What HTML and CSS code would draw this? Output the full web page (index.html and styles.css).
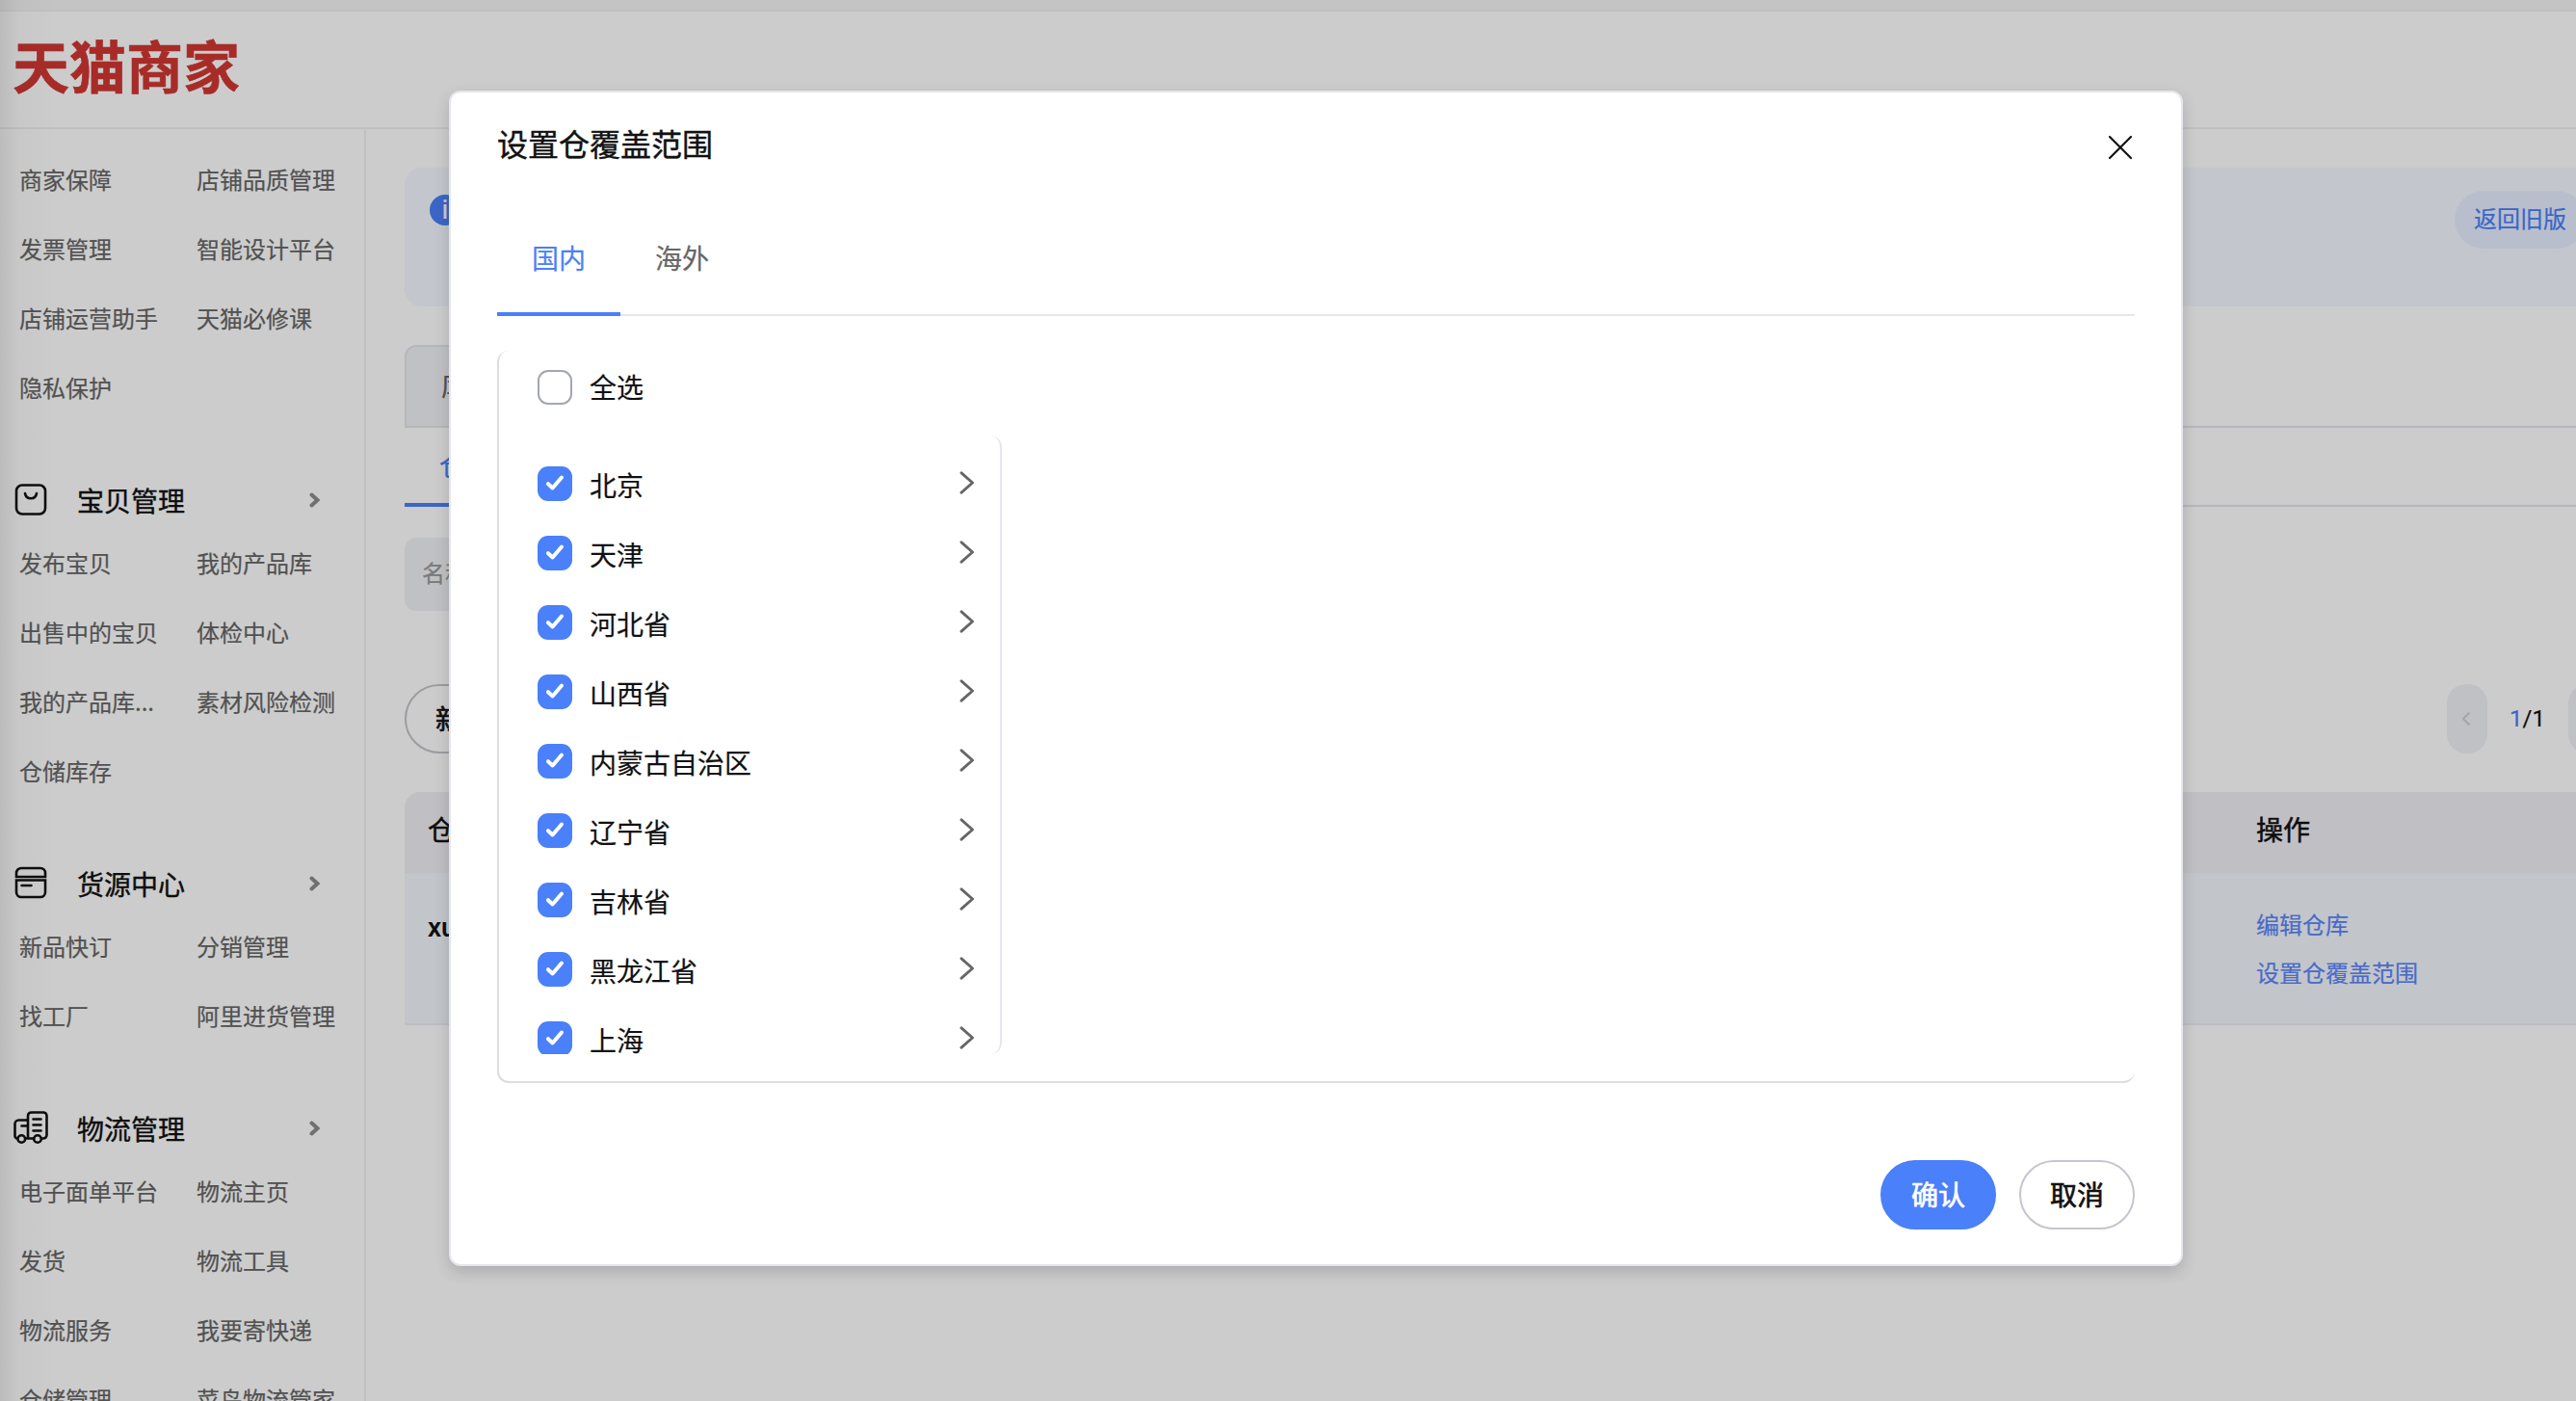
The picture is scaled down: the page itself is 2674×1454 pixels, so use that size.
FILE: index.html
```html
<!DOCTYPE html>
<html lang="zh-CN">
<head>
<meta charset="utf-8">
<title>天猫商家</title>
<link rel="stylesheet" href="styles.css">
</head>
<body>
<svg class="sprite" width="0" height="0">
  <symbol id="check" viewBox="0 0 36 36"><path d="M11 18.200l4.600 4.300L25 11.500" fill="none" stroke="#fff" stroke-width="4" stroke-linecap="round" stroke-linejoin="round"/></symbol>
  <symbol id="next" viewBox="0 0 16 24"><path d="M2 1.800L13.500 12L2 22.200" fill="none" stroke="#666" stroke-width="2.900" stroke-linecap="round" stroke-linejoin="round"/></symbol>
  <symbol id="more" viewBox="0 0 12 16"><path d="M2.500 2.500L8.500 8L2.500 13.500" fill="none" stroke="#8c8c8c" stroke-width="4" stroke-linecap="round"/></symbol>
</svg>
<div class="page">
  <div class="strip"></div>
  <header class="header"><h1 class="logo">天猫商家</h1></header>
  <div class="body">
    <nav class="side">
      <ul class="links">
        <li>商家保障</li><li>店铺品质管理</li>
        <li>发票管理</li><li>智能设计平台</li>
        <li>店铺运营助手</li><li>天猫必修课</li>
        <li>隐私保护</li>
      </ul>
      <h2 class="group">
        <svg class="group-icon" viewBox="0 0 36 36" fill="none" stroke="#111" stroke-width="2.600" stroke-linecap="round"><rect x="3" y="2.500" width="30" height="30" rx="6"/><path d="M12 11c1 7 11 7 12 0"/></svg>
        <span>宝贝管理</span><svg class="more"><use href="#more"/></svg>
      </h2>
      <ul class="links">
        <li>发布宝贝</li><li>我的产品库</li>
        <li>出售中的宝贝</li><li>体检中心</li>
        <li>我的产品库...</li><li>素材风险检测</li>
        <li>仓储库存</li>
      </ul>
      <h2 class="group">
        <svg class="group-icon" viewBox="0 0 36 36" fill="none" stroke="#111" stroke-width="2.600" stroke-linecap="round"><path d="M3 11V7a5 5 0 0 1 5-5h20a5 5 0 0 1 5 5v4z"/><path d="M3 14.500h30V27a5 5 0 0 1-5 5H8a5 5 0 0 1-5-5zM8.500 20h10"/></svg>
        <span>货源中心</span><svg class="more"><use href="#more"/></svg>
      </h2>
      <ul class="links">
        <li>新品快订</li><li>分销管理</li>
        <li>找工厂</li><li>阿里进货管理</li>
      </ul>
      <h2 class="group">
        <svg class="group-icon" viewBox="0 0 36 36" fill="none" stroke="#111" stroke-width="2.600" stroke-linecap="round"><path d="M15 28V5a3.500 3.500 0 0 1 3.500-3.500h12A3.500 3.500 0 0 1 34.500 5v20a3.500 3.500 0 0 1-3.500 3.500h-2M15 9.500H5.500a4 4 0 0 0-4 4V26a3 3 0 0 0 2.500 2.500M12.500 28.500h8.500M8.500 15.500h6M20.500 8.500h8M20.500 14.500h8M20.500 20.500h8"/><circle cx="8.300" cy="29" r="3.800"/><circle cx="25" cy="29" r="3.800"/></svg>
        <span>物流管理</span><svg class="more"><use href="#more"/></svg>
      </h2>
      <ul class="links">
        <li>电子面单平台</li><li>物流主页</li>
        <li>发货</li><li>物流工具</li>
        <li>物流服务</li><li>我要寄快递</li>
        <li>仓储管理</li><li>菜鸟物流管家</li>
      </ul>
    </nav>
    <main class="main">
      <section class="notice"><span class="info">i</span><span class="back">返回旧版</span></section>
      <div class="tabs"><span class="tab">库存</span></div>
      <div class="subtabs"><span class="subtab">仓库</span></div>
      <div class="search">名称</div>
      <div class="toolbar">
        <span class="create">新建</span>
        <div class="pager">
          <span class="page-button"><svg width="12" height="18" viewBox="0 0 12 18"><path d="M8.500 2.500L2 9l6.500 6.500" fill="none" stroke="#cfcfcf" stroke-width="2"/></svg></span>
          <span class="page-number"><b>1</b>/1</span>
          <span class="page-button"></span>
        </div>
      </div>
      <section class="table">
        <div class="thead"><span>仓库</span><span>操作</span></div>
        <div class="trow"><span class="name">xu</span><div class="actions"><a>编辑仓库</a><a>设置仓覆盖范围</a></div></div>
      </section>
    </main>
  </div>
</div>
<div class="mask"></div>
<section class="dialog">
  <header class="dialog-head">
    <h3>设置仓覆盖范围</h3>
    <svg width="28" height="28" viewBox="0 0 28 28"><path d="M3 3l22 22M25 3L3 25" stroke="#111" stroke-width="2.200" stroke-linecap="round"/></svg>
  </header>
  <div class="dialog-tabs"><span class="on">国内</span><span>海外</span></div>
  <div class="picker">
    <div class="item all"><i class="box"></i><span>全选</span></div>
    <div class="list">
      <div class="item"><svg class="box on"><use href="#check"/></svg><span>北京</span><svg class="next"><use href="#next"/></svg></div>
      <div class="item"><svg class="box on"><use href="#check"/></svg><span>天津</span><svg class="next"><use href="#next"/></svg></div>
      <div class="item"><svg class="box on"><use href="#check"/></svg><span>河北省</span><svg class="next"><use href="#next"/></svg></div>
      <div class="item"><svg class="box on"><use href="#check"/></svg><span>山西省</span><svg class="next"><use href="#next"/></svg></div>
      <div class="item"><svg class="box on"><use href="#check"/></svg><span>内蒙古自治区</span><svg class="next"><use href="#next"/></svg></div>
      <div class="item"><svg class="box on"><use href="#check"/></svg><span>辽宁省</span><svg class="next"><use href="#next"/></svg></div>
      <div class="item"><svg class="box on"><use href="#check"/></svg><span>吉林省</span><svg class="next"><use href="#next"/></svg></div>
      <div class="item"><svg class="box on"><use href="#check"/></svg><span>黑龙江省</span><svg class="next"><use href="#next"/></svg></div>
      <div class="item"><svg class="box on"><use href="#check"/></svg><span>上海</span><svg class="next"><use href="#next"/></svg></div>
    </div>
  </div>
  <footer class="dialog-foot"><button class="ok">确认</button><button>取消</button></footer>
</section>
</body>
</html>
```
FILE: styles.css
```css
* { box-sizing: border-box; margin: 0; padding: 0; }
html, body { width: 100%; height: 1454px; overflow: hidden; }
body { position: relative; background: #fff; color: #111; font: 28px/40px "Noto Sans CJK SC", sans-serif; -webkit-text-stroke: .2px; }
ul { list-style: none; }
.sprite { position: absolute; }

.page { height: 1454px; overflow: hidden; display: flex; flex-direction: column; }
.strip { flex: none; height: 12px; background: #f5f5f5; border-bottom: 2px solid #f0f0f0; }
.header { flex: none; height: 122px; border-bottom: 2px solid #f0f0f0; padding: 15px 0 0 13px; }
.logo { font-size: 59px; line-height: 80px; font-weight: 700; color: #d13732; white-space: nowrap; -webkit-text-stroke: .6px; }
.body { flex: 1; min-height: 0; display: flex; }

.side { flex: none; width: 380px; border-right: 2px solid #f0f0f0; padding: 16px 0 0 20px; overflow: hidden; }
.links { display: grid; grid-template-columns: 184px 174px; font-size: 24px; line-height: 72px; color: #666; white-space: nowrap; }
.group { display: flex; align-items: center; height: 110px; padding: 51px 45px 0 0; margin-left: -6px; font-size: 28px; font-weight: 400; -webkit-text-stroke: .4px; }
.group-icon { width: 36px; height: 36px; overflow: visible; }
.group span { margin-left: 30px; flex: 1; }
.more { width: 12px; height: 16px; }

.main { flex: 1; min-width: 0; padding: 40px 0 0 40px; overflow: hidden; }
.notice { height: 144px; background: #f4f8ff; border-radius: 18px 0 0 18px; display: flex; justify-content: space-between; padding: 24px 0 0 26px; }
.info { width: 32px; height: 32px; margin-top: 4px; border-radius: 50%; background: #4a80f9; color: #fff; font: 28px/32px Roboto, sans-serif; text-align: center; }
.back { flex: none; width: 136px; height: 60px; margin-right: -10px; border-radius: 30px; background: #e7eeff; color: #4a80f9; font-size: 24px; line-height: 56px; text-align: center; }
.tabs { display: flex; height: 86px; margin-top: 40px; border-bottom: 2px solid #e4e5ee; }
.tab { height: 86px; width: 180px; padding-left: 36px; background: #f1f2f5; border: 2px solid #e4e5ea; border-radius: 12px 12px 0 0; line-height: 78px; color: #666; }
.subtabs { display: flex; height: 82px; border-bottom: 2px solid #e4e5ee; }
.subtab { height: 82px; width: 128px; padding-left: 36px; border-bottom: 4px solid #4a80f9; color: #4a80f9; line-height: 77px; }
.search { width: 480px; height: 76px; margin-top: 32px; padding-left: 18px; background: #f1f2f6; border-radius: 12px; color: #999; font-size: 24px; line-height: 72px; }
.toolbar { display: flex; justify-content: space-between; align-items: center; height: 72px; margin-top: 76px; }
.create { width: 160px; height: 72px; padding-left: 30px; border: 2px solid #c3c3cb; border-radius: 36px; line-height: 66px; -webkit-text-stroke: .7px; }
.pager { display: flex; align-items: center; margin-right: -34px; }
.page-button { display: flex; align-items: center; justify-content: center; width: 42px; height: 72px; border-radius: 20px; background: #f1f2f6; }
.page-number { width: 84px; padding-left: 23px; font: 24px/73px Roboto, sans-serif; white-space: nowrap; }
.page-number b { font-weight: 400; color: #4a80f9; }
.table { margin-top: 40px; }
.thead, .trow { display: grid; grid-template-columns: 1898px 1fr; padding-left: 24px; }
.thead { height: 84px; background: #f1f1f6; border-radius: 16px 0 0 0; line-height: 77px; -webkit-text-stroke: .5px; }
.trow { height: 158px; background: #f3f7fd; border-bottom: 2px solid #ebedf3; }
.name { font: 500 28px/114px Roboto, sans-serif; }
.actions { display: flex; flex-direction: column; padding-top: 28px; font-size: 24px; line-height: 49.500px; color: #5c86fa; }

.mask { position: absolute; inset: 0; background: linear-gradient(90deg, rgba(0,0,0,.08), rgba(0,0,0,.02) 20px, transparent 60px), rgba(0,0,0,.2); }

.dialog { position: absolute; left: 466px; top: 94px; width: 1800px; height: 1220px; padding: 0 48px; background: #fff; border: 2px solid #e5e6ec; border-radius: 12px; box-shadow: 0 6px 16px rgba(0,0,0,.16); }
.dialog-head { display: flex; justify-content: space-between; height: 108px; padding: 30px 1px 0 0; }
.dialog-head h3 { font-size: 32px; line-height: 44px; font-weight: 400; -webkit-text-stroke: .4px; }
.dialog-head svg { margin-top: 13px; }
.dialog-tabs { display: flex; height: 124px; border-bottom: 2px solid #e6e7ec; color: #666; }
.dialog-tabs span { width: 128px; height: 124px; line-height: 126px; text-align: center; }
.dialog-tabs .on { color: #4a80f9; border-bottom: 4px solid #4a80f9; }
.picker { height: 760px; margin-top: 36px; border: solid #dcdde3; border-width: 0 0 2px 2px; border-radius: 12px; }
.item { display: flex; align-items: center; height: 72px; padding: 0 26px 0 40px; }
.item span { flex: 1; margin-left: 18px; padding-top: 1px; }
.box { flex: none; width: 36px; height: 36px; border-radius: 11px; }
.all { height: 76px; }
.all .box { border: 2px solid #a3a6b2; }
.all span { padding: 0 0 3px; }
.box.on { background: #4a80f9; }
.next { width: 16px; height: 24px; margin-bottom: 2px; }
.list { width: 522px; height: 642px; margin-top: 12px; padding-top: 14px; overflow: hidden; border-right: 2px solid #e6e7ec; border-radius: 12px; }
.dialog-foot { display: flex; justify-content: flex-end; gap: 24px; margin-top: 80px; }
.dialog-foot button { width: 120px; height: 72px; padding-bottom: 2px; border: 2px solid #c4c6cf; border-radius: 36px; background: #fff; color: #111; font: 400 28px/40px "Noto Sans CJK SC", sans-serif; -webkit-text-stroke: .7px; }
.dialog-foot .ok { background: #4a80f9; border-color: #4a80f9; color: #fff; }
```
